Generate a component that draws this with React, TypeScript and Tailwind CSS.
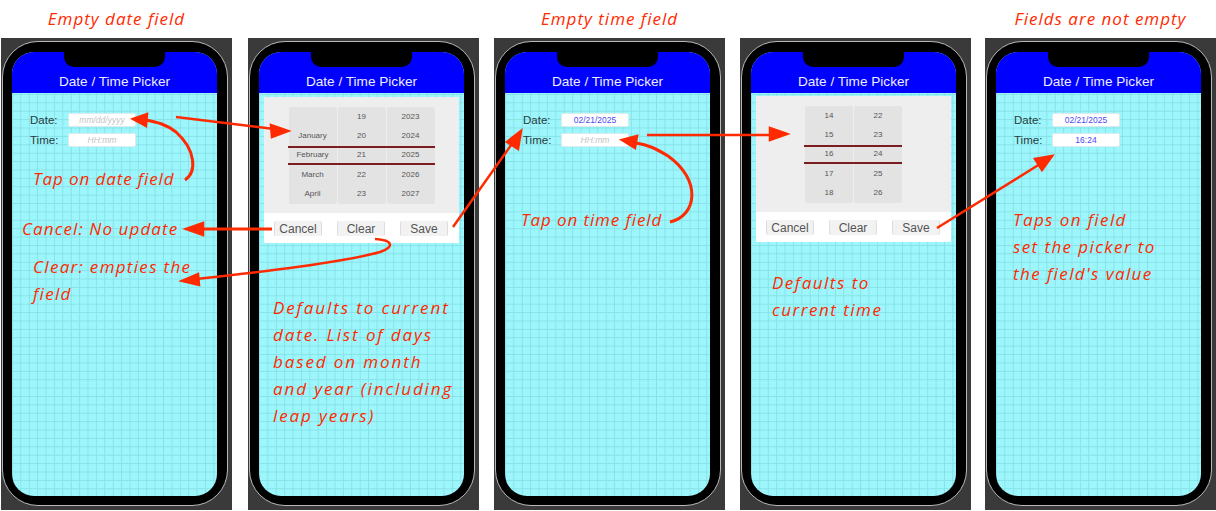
import React from "react";

const Note = ({ lines, className }: { lines: string[]; className: string }) => (
  <div className={`font-['Open_Sans',sans-serif] italic text-[17px] leading-[27px] whitespace-nowrap text-[#ff2a00] ${className}`}>
    {lines.map((line) => (
      <div key={line}>{line}</div>
    ))}
  </div>
);

const Field = ({ label, value, placeholder }: { label: string; value?: string; placeholder: string }) => (
  <div className="flex items-center h-[14px]">
    <span className="w-[38px] pt-[1px] text-[11.5px] text-[#2a3a3c]">{label}</span>
    <div
      className={`w-[68px] h-[14px] flex items-center justify-center bg-white rounded-[2px] border border-[#dcecec] text-[8.5px] ${
        value ? "text-[#4a4af5]" : "italic text-[#c4c4c4]"
      }`}
    >
      {value || placeholder}
    </div>
  </div>
);

const Form = ({ date, time }: { date?: string; time?: string }) => (
  <div className="flex flex-col gap-[6px] pt-[20px] pl-[18px]">
    <Field label="Date:" value={date} placeholder="mm/dd/yyyy" />
    <Field label="Time:" value={time} placeholder="HH:mm" />
  </div>
);

const Wheel = ({ items }: { items: string[] }) => (
  <div className="w-[48px] h-[97px] flex flex-col bg-[#e3e3e3] rounded-[2px]">
    {items.map((item, i) => (
      <div key={i} className="h-[19.4px] flex items-center justify-center text-[8px] text-[#555555]">
        {item}
      </div>
    ))}
  </div>
);

const Picker = ({ columns, className }: { columns: string[][]; className: string }) => (
  <div className={`mx-[5px] w-[195px] h-[146px] flex flex-col bg-white ${className}`}>
    <div className="h-[116px] bg-[#eeeeee] pt-[10px] flex justify-center">
      <div className="relative flex gap-[1px] h-[97px]">
        {columns.map((items, i) => (
          <Wheel key={i} items={items} />
        ))}
        {/* selection lines */}
        <div className="absolute -left-[1px] right-0 top-[39px] h-[2px] bg-[#7a1c20]"></div>
        <div className="absolute -left-[1px] right-0 top-[56px] h-[2px] bg-[#7a1c20]"></div>
      </div>
    </div>
    <div className="flex gap-[15px] px-[10px] pt-[8px]">
      {["Cancel", "Clear", "Save"].map((label) => (
        <div
          key={label}
          className="w-[48px] h-[15px] flex items-center justify-center bg-[#f2f2f2] border-x border-[#dddddd] rounded-[2px] text-[12px] text-[#555555]"
        >
          {label}
        </div>
      ))}
    </div>
  </div>
);

const Phone = ({ title, className = "", children }: { title?: string; className?: string; children: React.ReactNode }) => (
  <div className={`w-[231px] shrink-0 flex flex-col ${className}`}>
    <div className="h-[38px] pt-[6px] flex justify-center font-['Open_Sans',sans-serif] italic text-[17px] leading-[26px] tracking-[1px] text-[#ff2a00]">
      {title}
    </div>
    <div className="h-[472px] bg-[#3a3a3a] pt-[3px] pl-[1px]">
      {/* phone body */}
      <div className="relative w-[226px] h-[465px] bg-black border border-[#b8b8b8] rounded-[36px] pl-[9px] pt-[10px]">
        <div className="w-[205px] h-[444px] rounded-[22px] overflow-hidden flex flex-col bg-[#9df6fb] bg-[linear-gradient(#86e2e7_1px,transparent_1px),linear-gradient(90deg,#86e2e7_1px,transparent_1px)] bg-[size:8.4px_8.4px]">
          <div className="relative h-[41px] shrink-0 bg-[#0000ff] pt-[21px] text-center text-[13.6px] leading-[18px] text-[#eeeeff]">
            <div className="absolute top-0 left-[52px] w-[101px] h-[15px] bg-black rounded-b-[10px]"></div>
            Date / Time Picker
          </div>
          {children}
        </div>
      </div>
    </div>
  </div>
);

const datePicker = [
  ["", "January", "February", "March", "April"],
  ["19", "20", "21", "22", "23"],
  ["2023", "2024", "2025", "2026", "2027"],
];

const timePicker = [
  ["14", "15", "16", "17", "18"],
  ["22", "23", "24", "25", "26"],
];

const App = () => {
  return (
    <div className="relative w-[1216px] h-[511px] overflow-hidden bg-white pl-[1px] flex gap-[15px] font-['Liberation_Sans',Arial,sans-serif]">
      <Phone title="Empty date field" className="mr-[1px]">
        <Form />
        <Note lines={["Tap on date field"]} className="mt-[18px] ml-[21px] tracking-[0.9px]" />
        <Note lines={["Cancel: No update"]} className="mt-[23px] ml-[10px] tracking-[1.1px]" />
        <Note lines={["Clear: empties the", "field"]} className="mt-[11px] ml-[21px] tracking-[1.3px]" />
      </Phone>
      <Phone>
        <Picker columns={datePicker} className="mt-[4px]" />
        <Note
          lines={["Defaults to current", "date. List of days", "based on month", "and year (including", "leap years)"]}
          className="mt-[51px] ml-[14px] tracking-[1.9px]"
        />
      </Phone>
      <Phone title="Empty time field">
        <Form date="02/21/2025" />
        <Note lines={["Tap on time field"]} className="mt-[59px] ml-[16px] tracking-[0.9px]" />
      </Phone>
      <Phone>
        <Picker columns={timePicker} className="mt-[3px]" />
        <Note lines={["Defaults to", "current time"]} className="mt-[27px] ml-[21px] tracking-[1.5px]" />
      </Phone>
      <Phone title="Fields are not empty" className="-ml-[1px]">
        <Form date="02/21/2025" time="16:24" />
        <Note lines={["Taps on field", "set the picker to", "the field's value"]} className="mt-[59px] ml-[17px] tracking-[1.4px]" />
      </Phone>

      {/* arrows */}
      <svg className="absolute inset-0 pointer-events-none" width="1216" height="511" fill="none" stroke="#ff2a00" strokeWidth="2.5">
        <path d="M185 180C197 172 196 150 176 132C166 124 156 122 146 120" strokeWidth="3" />
        <path d="M133 119L147 114L146 126Z" fill="#ff2a00" />
        <path d="M176 117L274 129" />
        <path d="M288 131L271 125L272 137Z" fill="#ff2a00" />
        <path d="M272 229H202" strokeWidth="3" />
        <path d="M186 229L203 223V235Z" fill="#ff2a00" />
        <path d="M375 239C393 240 395 247 380 252C340 263 260 272 196 279" />
        <path d="M182 281L198 274L199 285Z" fill="#ff2a00" />
        <path d="M453 227L514 141" />
        <path d="M521 131L518 149L507 142Z" fill="#ff2a00" />
        <path d="M670 222C697 216 702 180 668 156C655 148 648 145 636 143" strokeWidth="3" />
        <path d="M622 140L637 136L635 148Z" fill="#ff2a00" />
        <path d="M647 135H772" />
        <path d="M787 134L770 128V140Z" fill="#ff2a00" />
        <path d="M937 228L1040 164" />
        <path d="M1052 156L1042 170L1035 159Z" fill="#ff2a00" />
      </svg>
    </div>
  );
};

export default App;
